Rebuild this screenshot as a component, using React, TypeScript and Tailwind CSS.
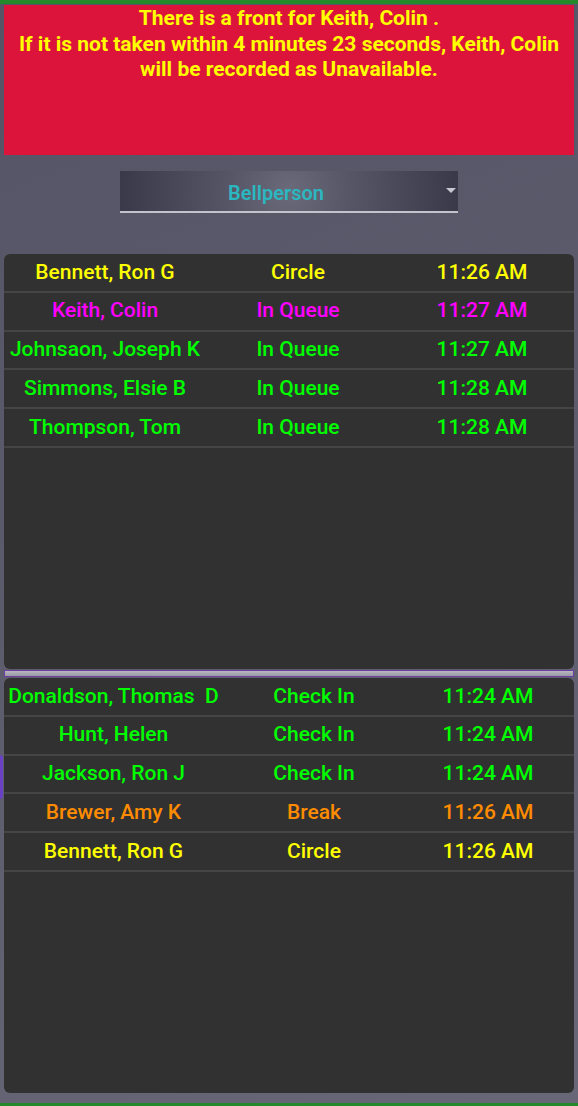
type Row = { name: string; status: string; time: string; color: string };

const queue: Row[] = [
  { name: "Bennett, Ron G", status: "Circle", time: "11:26 AM", color: "text-[#ffff00]" },
  { name: "Keith, Colin", status: "In Queue", time: "11:27 AM", color: "text-[#ff00ff]" },
  { name: "Johnsaon, Joseph K", status: "In Queue", time: "11:27 AM", color: "text-[#00ff00]" },
  { name: "Simmons, Elsie B", status: "In Queue", time: "11:28 AM", color: "text-[#00ff00]" },
  { name: "Thompson, Tom", status: "In Queue", time: "11:28 AM", color: "text-[#00ff00]" },
];

const staff: Row[] = [
  { name: "Donaldson, Thomas \u00a0D", status: "Check In", time: "11:24 AM", color: "text-[#00ff00]" },
  { name: "Hunt, Helen", status: "Check In", time: "11:24 AM", color: "text-[#00ff00]" },
  { name: "Jackson, Ron J", status: "Check In", time: "11:24 AM", color: "text-[#00ff00]" },
  { name: "Brewer, Amy K", status: "Break", time: "11:26 AM", color: "text-[#ff8c00]" },
  { name: "Bennett, Ron G", status: "Circle", time: "11:26 AM", color: "text-[#ffff00]" },
];

function Panel({ rows, cols }: { rows: Row[]; cols: string }) {
  return (
    <div className="h-[415px] rounded-md bg-[#313131] overflow-hidden">
      {rows.map((r, i) => (
        <div
          key={i}
          className={`grid ${cols} h-[38.8px] items-center border-b-2 border-[#454545] text-[21px] font-medium ${r.color}`}
        >
          <div className="text-center whitespace-pre">{r.name}</div>
          <div className="text-center">{r.status}</div>
          <div className="text-center">{r.time}</div>
        </div>
      ))}
    </div>
  );
}

export default function App() {
  return (
    <div
      className="relative h-[1106px] flex flex-col border-t-4 border-b-[3px] border-[#23892a] bg-[linear-gradient(160deg,#545466_0%,#5d5c6d_50%,#676777_100%)] px-1 overflow-hidden"
      style={{ fontFamily: "Roboto, 'Liberation Sans', sans-serif" }}
    >
      <div className="mt-[1px] h-[150px] bg-[#dc143c] pt-[1px] text-center text-[21px] leading-[25.5px] font-bold text-[#ffff00]">
        There is a front for Keith, Colin .
        <br />
        If it is not taken within 4 minutes 23 seconds, Keith, Colin
        <br />
        will be recorded as Unavailable.
      </div>

      <div className="mt-4 flex justify-center">
        <div className="relative flex h-[42px] w-[338px] items-center justify-center border-b-2 border-[#c4c3cc] pt-1 pr-[26px] bg-[radial-gradient(circle_at_center,#6b6a7a_0%,#55546466_35%,#3a3949_100%)]">
          <span className="text-[20px] font-semibold text-[#2bb7bf]">Bellperson</span>
          <span className="absolute right-[2px] top-[17px] h-0 w-0 border-x-[5px] border-t-[5px] border-x-transparent border-t-[#c8c8d0]" />
        </div>
      </div>

      <div className="mt-[41px]">
        <Panel rows={queue} cols="grid-cols-[202px_184px_1fr]" />
      </div>

      <div className="mt-px h-[7px] border border-[#6d3fa3] bg-[linear-gradient(180deg,#b8b7c0_0%,#9a99a4_100%)]" />

      <div className="mt-px">
        <Panel rows={staff} cols="grid-cols-[219px_182px_166px]" />
      </div>

      <div className="absolute left-[-4px] top-[751px] h-[44px] w-[7px] rounded-full bg-[#6a40c4]" />
    </div>
  );
}
